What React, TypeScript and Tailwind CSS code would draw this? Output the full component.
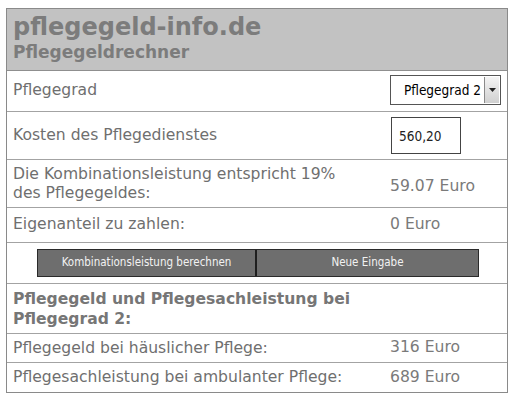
const labelFont = { fontFamily: '"DejaVu Sans", Verdana, sans-serif' };
const narrowFont = { fontFamily: '"DejaVu Sans Condensed", "Liberation Sans Narrow", sans-serif' };

type Row = {
  label: string;
  value: string;
  h: string;
};

const resultRows: Row[] = [
  { label: 'Pflegegeld bei häuslicher Pflege:', value: '316 Euro', h: 'h-[29px]' },
  { label: 'Pflegesachleistung bei ambulanter Pflege:', value: '689 Euro', h: 'h-[29px]' },
];

function Cells({ label, value, h, last }: Row & { last?: boolean }) {
  return (
    <div className={`grid grid-cols-[376px_1fr] items-center ${h} ${last ? '' : 'border-b border-[#a3a3a3]'}`}>
      <div className="pl-[6px] pr-[14px] leading-[19px]">{label}</div>
      <div className="pl-[7px] text-[#7a7a7a]">{value}</div>
    </div>
  );
}

export default function App() {
  return (
    <div className="min-h-[400px] bg-white pt-[8px] pl-[6px]" style={labelFont}>
      <div className="w-[502px] border border-[#8a8a8a] text-[15.6px] text-[#6f6f6f]">
        <div className="h-[62px] bg-[#c2c2c2] border-b border-[#8f8f8f] px-[6px] pt-[4px] font-bold text-[#7c7c7c]">
          <div className="text-[24px] leading-[28px]">pflegegeld-info.de</div>
          <div className="text-[17px] leading-[22px]">Pflegegeldrechner</div>
        </div>

        <div className="grid grid-cols-[376px_1fr] items-center h-[41px] border-b border-[#a3a3a3]">
          <div className="pl-[6px]">Pflegegrad</div>
          <div className="pl-[7px]">
            <div className="flex w-[111px] h-[30px] -mt-[2px] border border-[#555] bg-white items-stretch">
              <span className="flex-1 flex items-center justify-end pr-[3px] text-[13.5px] text-black" style={narrowFont}>
                Pflegegrad 2
              </span>
              <span className="w-[15px] my-[1px] mr-[1px] flex items-center justify-center bg-gradient-to-b from-[#f4f4f4] to-[#d0d0d0] border-l border-[#8a8a8a]">
                <svg width="7" height="4" viewBox="0 0 7 4">
                  <path d="M0 0h7L3.5 4z" fill="#222" />
                </svg>
              </span>
            </div>
          </div>
        </div>

        <div className="grid grid-cols-[376px_1fr] items-center h-[48px] border-b border-[#a3a3a3]">
          <div className="pl-[6px]">Kosten des Pflegedienstes</div>
          <div className="pl-[8px]">
            <div
              className="w-[70px] h-[37px] border border-[#444] flex items-center pl-[7px] pt-[2px] text-[13.5px] text-[#222]"
              style={narrowFont}
            >
              560,20
            </div>
          </div>
        </div>

        <div className="grid grid-cols-[376px_1fr] items-center h-[48px] border-b border-[#a3a3a3]">
          <div className="pl-[6px] pr-[24px] leading-[19px]">
            Die Kombinationsleistung entspricht 19% des Pflegegeldes:
          </div>
          <div className="pl-[7px] pt-[6px] text-[#7a7a7a]">59.07 Euro</div>
        </div>

        <div className="grid grid-cols-[376px_1fr] items-center h-[35px] border-b border-[#a3a3a3]">
          <div className="pl-[6px]">Eigenanteil zu zahlen:</div>
          <div className="pl-[7px] text-[#7a7a7a]">0 Euro</div>
        </div>

        <div className="h-[41px] border-b border-[#a3a3a3] flex items-center pl-[30px]">
          <div
            className="flex w-[442px] h-[28px] border border-[#2a2a2a] bg-[#6e6e6e] text-[11.5px] text-[#f2f2f2]"
            style={narrowFont}
          >
            <button className="w-[219px] border-r-2 border-[#1e1e1e] flex items-center justify-center">
              Kombinationsleistung berechnen
            </button>
            <button className="flex-1 flex items-center justify-center">Neue Eingabe</button>
          </div>
        </div>

        <div className="grid grid-cols-[376px_1fr] items-center h-[50px] border-b border-[#a3a3a3]">
          <div className="pl-[6px] pr-[14px] font-bold leading-[20px] text-[#767676]">
            Pflegegeld und Pflegesachleistung bei Pflegegrad 2:
          </div>
          <div />
        </div>

        {resultRows.map((row, i) => (
          <Cells key={row.label} {...row} last={i === resultRows.length - 1} />
        ))}
      </div>
    </div>
  );
}
